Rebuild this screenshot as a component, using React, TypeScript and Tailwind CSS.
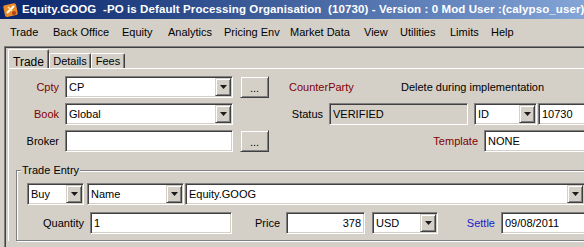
import type { ReactNode } from "react";

const sunken =
  "border border-t-[#808080] border-l-[#808080] border-b-white border-r-white shadow-[inset_1px_1px_0_#404040,inset_-1px_-1px_0_#d4d0c8]";
const raised =
  "bg-[#d4d0c8] border border-t-[#d4d0c8] border-l-[#d4d0c8] border-b-[#404040] border-r-[#404040] shadow-[inset_1px_1px_0_#ffffff,inset_-1px_-1px_0_#808080]";

const menu: [string, string][] = [
  ["Trade", "w-[43px]"],
  ["Back Office", "w-[69px]"],
  ["Equity", "w-[46px]"],
  ["Analytics", "w-[56px]"],
  ["Pricing Env", "w-[66px]"],
  ["Market Data", "w-[74px]"],
  ["View", "w-[36px]"],
  ["Utilities", "w-[50px]"],
  ["Limits", "w-[41px]"],
  ["Help", "w-[40px]"],
];

function Field({ w, children, gray, right }: { w: string; children?: ReactNode; gray?: boolean; right?: boolean }) {
  return (
    <div
      className={`${w} h-[22px] shrink-0 flex items-center px-[3px] ${gray ? "bg-[#d4d0c8]" : "bg-white"} ${
        right ? "justify-end" : ""
      } ${sunken}`}
    >
      <span className="truncate">{children}</span>
    </div>
  );
}

function Arrow() {
  return (
    <div className={`w-[16px] h-[18px] shrink-0 flex items-center justify-center ${raised}`}>
      <svg width="7" height="4" viewBox="0 0 7 4">
        <polygon points="0,0 7,0 3.5,4" fill="#1a1a1a" />
      </svg>
    </div>
  );
}

function Combo({ w, children }: { w: string; children?: ReactNode }) {
  return (
    <div className={`${w} h-[22px] shrink-0 flex items-center bg-white pl-[3px] pr-[1px] ${sunken}`}>
      <span className="flex-1 truncate">{children}</span>
      <Arrow />
    </div>
  );
}

function Dots() {
  return (
    <div className={`w-[29px] h-[22px] shrink-0 ml-[7px] flex items-center justify-center pt-[2px] ${raised}`}>
      ...
    </div>
  );
}

function Label({ w, children, tone }: { w: string; children: ReactNode; tone?: string }) {
  return <div className={`${w} shrink-0 text-right pr-[6px] ${tone ?? "text-black"}`}>{children}</div>;
}

export default function App() {
  return (
    <div className="w-[584px] h-[247px] overflow-hidden bg-[#d4d0c8] text-[11px] text-black font-['Liberation_Sans',Arial,sans-serif]">
      {/* title bar */}
      <div className="h-[19px] flex items-center pl-[3px] bg-gradient-to-r from-[#0a246a] to-[#84a5d7] text-white font-bold whitespace-pre">
        <svg width="16" height="16" viewBox="0 0 16 16" className="shrink-0">
          <rect x="1" y="2" width="13" height="12" rx="2" fill="#e88a2a" transform="rotate(-12 8 8)" />
          <path d="M4 11 L11 4" stroke="#fff" strokeWidth="2" />
          <path d="M5 5 L9 9" stroke="#fde7b0" strokeWidth="1.5" />
          <circle cx="11" cy="11" r="2" fill="#b3421b" />
        </svg>
        <span className="ml-[3px] text-[11.5px] tracking-[0.1px]">
          Equity.GOOG  -PO is Default Processing Organisation  (10730) - Version : 0 Mod User :(calypso_user)
        </span>
      </div>

      {/* menu bar */}
      <div className="h-[26px] flex items-center pl-[10px]">
        {menu.map(([label, w]) => (
          <span key={label} className={`${w} shrink-0 whitespace-nowrap`}>
            {label}
          </span>
        ))}
      </div>

      {/* main panel */}
      <div className="ml-[4px] mt-[1px] h-[300px] border-t border-l border-[#808080] shadow-[inset_1px_1px_0_#404040] pl-[2px] pt-[2px]">
        {/* tabs */}
        <div className="flex items-end h-[19px] pl-[1px]">
          <div className="w-[41px] h-[19px] flex items-start justify-center pt-[3px] border-t border-l border-white border-r border-r-[#404040] rounded-t-[2px] shadow-[inset_-1px_0_0_#808080] text-[12px]">
            Trade
          </div>
          <div className="w-[42px] h-[15px] flex items-center justify-center border-t border-l border-white border-r border-r-[#404040] rounded-t-[2px] shadow-[inset_-1px_0_0_#808080]">
            Details
          </div>
          <div className="w-[34px] h-[15px] flex items-center justify-center border-t border-l border-white border-r border-r-[#404040] rounded-t-[2px] shadow-[inset_-1px_0_0_#808080]">
            Fees
          </div>
        </div>

        {/* tab content */}
        <div className="ml-[1px] border-t border-l border-white pt-[7px] flex flex-col gap-[5px]">
          <div className="flex items-center">
            <Label w="w-[56px]" tone="text-[#800000]">Cpty</Label>
            <Combo w="w-[168px]">CP</Combo>
            <Dots />
            <div className="w-[112px] shrink-0 ml-[20px] text-[#800000]">CounterParty</div>
            <div className="whitespace-nowrap">Delete during implementation</div>
          </div>
          <div className="flex items-center">
            <Label w="w-[56px]" tone="text-[#800000]">Book</Label>
            <Combo w="w-[168px]">Global</Combo>
            <Label w="w-[96px]">Status</Label>
            <Field w="w-[139px]" gray>
              VERIFIED
            </Field>
            <div className="ml-[6px]">
              <Combo w="w-[63px]">ID</Combo>
            </div>
            <div className="ml-[1px]">
              <Field w="w-[60px]">10730</Field>
            </div>
          </div>
          <div className="flex items-center">
            <Label w="w-[56px]">Broker</Label>
            <Field w="w-[168px]" />
            <Dots />
            <Label w="w-[215px]" tone="text-[#800000]">Template</Label>
            <Field w="w-[120px]">NONE</Field>
          </div>

          {/* trade entry group */}
          <fieldset className="ml-[7px] mt-[7px] w-[620px] border border-[#808080] shadow-[1px_1px_0_#ffffff,inset_1px_1px_0_#ffffff] pt-[6px] pb-[6px]">
            <legend className="ml-[4px] px-[1px] leading-[13px] bg-[#d4d0c8]">Trade Entry</legend>
            <div className="flex items-center pl-[10px]">
              <Combo w="w-[57px]">Buy</Combo>
              <div className="ml-[3px]">
                <Combo w="w-[97px]">Name</Combo>
              </div>
              <div className="ml-[1px]">
                <Combo w="w-[400px]">Equity.GOOG</Combo>
              </div>
            </div>
            <div className="flex items-center mt-[7px]">
              <Label w="w-[73px]">Quantity</Label>
              <Field w="w-[142px]">1</Field>
              <Label w="w-[54px]">Price</Label>
              <Field w="w-[79px]" right>
                378
              </Field>
              <div className="ml-[7px]">
                <Combo w="w-[66px]">USD</Combo>
              </div>
              <Label w="w-[63px]" tone="text-[#1a1acc]">Settle</Label>
              <Field w="w-[100px]">09/08/2011</Field>
            </div>
          </fieldset>
        </div>
      </div>
    </div>
  );
}
